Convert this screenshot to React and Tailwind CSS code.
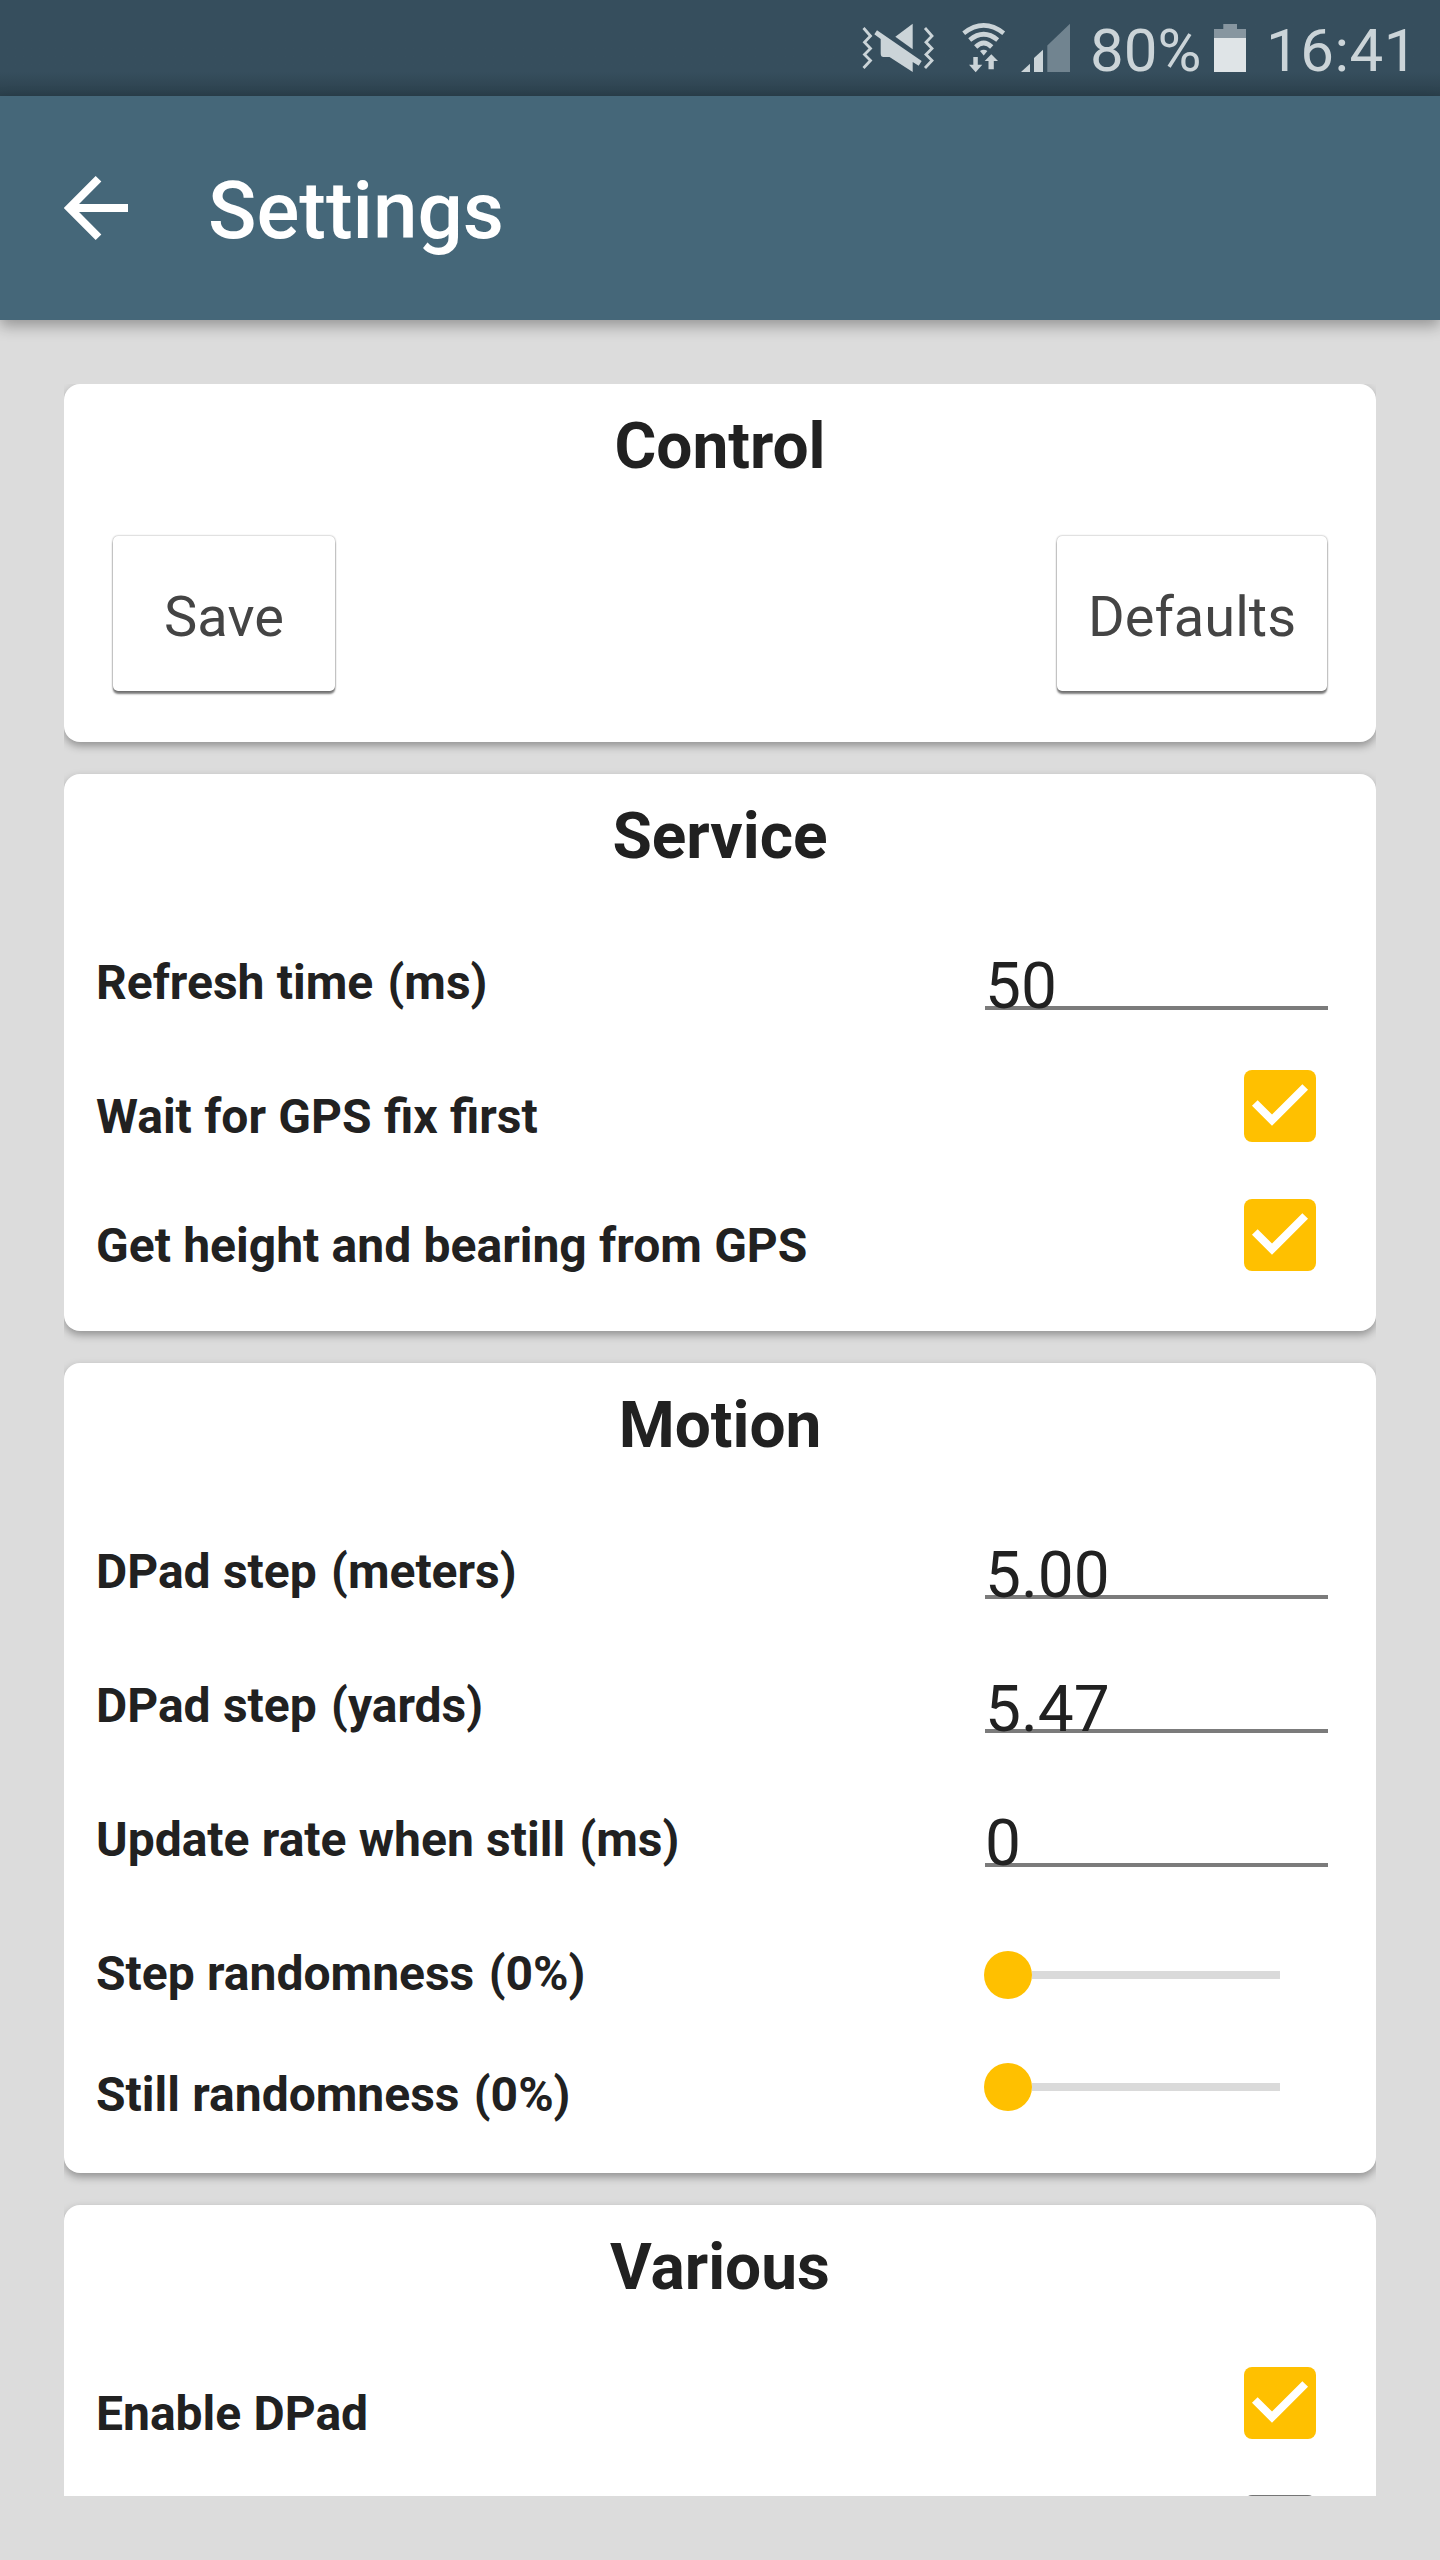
import React from "react";

function MuteVibrateIcon() {
  return (
    <svg className="h-[60px] w-[76px]" viewBox="860 20 76 60" fill="none">
      <g stroke="#cbd4d8" strokeWidth="2.800">
        <path d="M863.500 28L870.500 36L864.500 42.200L870.500 48.500L864.500 54.500L870.500 60.500L863.500 68" />
        <path d="M925 28L932 36L926 42.200L932 48.500L926 54.500L932 60.500L925 68" />
      </g>
      <path d="M912.700 23.700V49.300L895.300 36.700Z" fill="#cbd4d8" />
      <path d="M877 30.200L921.700 61L918.700 65.700L912.700 62V72L889.500 57H883.500Q880.700 57 880.700 53.500V39L874.300 34.200Z" fill="#cbd4d8" />
    </svg>
  );
}

function WifiIcon() {
  return (
    <svg className="h-[60px] w-[46px]" viewBox="960 20 46 60" fill="none">
      <g stroke="#cbd4d8" strokeWidth="4.600">
        <path d="M963.700 33.200Q983.700 17.600 1003.700 33.200" />
        <path d="M969.700 40Q983.700 28.500 997.700 40" />
        <path d="M975.700 47Q983.700 39 991.700 47" />
      </g>
      <path d="M980 51Q983.700 48.500 987.400 51L983.700 55.500Z" fill="#cbd4d8" />
      <path d="M973.300 57H977.800V64.700H982.300L975.700 72.300L969 64.700H973.300Z" fill="#cbd4d8" />
      <path d="M991.300 54.300L998 61H993.800V69.300H988.500V61H984.700Z" fill="#cbd4d8" />
    </svg>
  );
}

function SignalIcon() {
  return (
    <svg className="h-[60px] w-[52px]" viewBox="1020 20 52 60">
      <path d="M1021 72L1030 63.700V72Z" fill="#cbd4d8" />
      <path d="M1034 72V58L1043 49.700V72Z" fill="#cbd4d8" />
      <path d="M1047.300 72V45.500L1070 23.700V72Z" fill="#718490" />
    </svg>
  );
}

function BatteryIcon() {
  return (
    <svg className="h-[60px] w-[32px]" viewBox="0 20 32 60">
      <path d="M0 38V29H9.300V24H23V29H32V38Z" fill="#8796a0" />
      <path d="M0 38H32V72H0Z" fill="#dfe4e7" />
    </svg>
  );
}

function StatusBar() {
  return (
    <div className="flex h-24 items-start justify-end bg-linear-to-b from-[#364e5d] from-75% to-[#2b404c] pt-5 text-[60px] leading-[61px] text-[#cbd4d8]">
      <MuteVibrateIcon />
      <div className="ml-6"><WifiIcon /></div>
      <div className="ml-[14px]"><SignalIcon /></div>
      <div className="ml-[18px] w-[112px] whitespace-nowrap">80%</div>
      <div className="ml-[12px]"><BatteryIcon /></div>
      <div className="ml-[20px] w-[174px] tracking-[0.5px] whitespace-nowrap">16:41</div>
    </div>
  );
}

function AppBar() {
  return (
    <header className="relative flex h-56 items-center bg-[#456779] shadow-[0_6px_14px_rgba(0,0,0,0.32)]">
      <svg className="ml-16 h-16 w-16" viewBox="0 0 64 64" fill="none" stroke="#fff" strokeWidth="8">
        <path d="M64 32H10M34.500 2.800L5.500 32L34.500 61.200" />
      </svg>
      <h1 className="mt-[6px] ml-20 text-[80px] leading-[96px] font-medium text-white">Settings</h1>
    </header>
  );
}

function Card({ title, children }) {
  return (
    <section className="rounded-2xl bg-white pb-[21px] shadow-[0_4px_8px_rgba(0,0,0,0.34)]">
      <h2 className="mb-[18px] text-center text-[64px] leading-[126px] font-bold">{title}</h2>
      {children}
    </section>
  );
}

function ActionButton({ children, className }) {
  return (
    <button className={"h-[155px] rounded-[5px] bg-white pt-[6px] text-[56px] leading-none text-[#444] shadow-[0_0_2px_rgba(0,0,0,0.45),0_3px_2px_rgba(0,0,0,0.5)] " + className}>
      {children}
    </button>
  );
}

function Label({ text, unit, className }) {
  return (
    <label className={"text-[48px] leading-[56px] font-bold [word-spacing:0.4px] " + className}>
      {text}
      {unit && <span className="ml-[2px]"> {unit}</span>}
    </label>
  );
}

function FieldRow({ label, unit, value }) {
  return (
    <div className="flex h-[134px] items-start justify-between pr-12 pl-8">
      <Label text={label} unit={unit} className="mt-[37px]" />
      <div className="mt-8 h-[60px] w-[343px] border-b-4 border-[#7b7b7b] text-[64px] leading-[74px]">{value}</div>
    </div>
  );
}

function CheckRow({ label, checked }) {
  return (
    <div className="flex h-[129px] items-start justify-between pr-[60px] pl-8">
      <Label text={label} className="mt-[37px]" />
      {checked ? (
        <div className="mt-[18px] size-[72px] rounded-lg bg-[#ffc000]">
          <svg viewBox="0 0 72 72" fill="none" stroke="#fff" strokeWidth="8">
            <path d="M10.800 33L28 50.200L61.200 17" />
          </svg>
        </div>
      ) : (
        <div className="mt-[17px] size-[72px] rounded-lg border-8 border-[#757575]" />
      )}
    </div>
  );
}

function SliderRow({ label, unit, className, labelClass, sliderClass }) {
  return (
    <div className={"flex items-start justify-between pr-24 pl-8 " + className}>
      <Label text={label} unit={unit} className={labelClass} />
      <div className={"flex w-[296px] items-center " + sliderClass}>
        <div className="size-12 rounded-full bg-[#ffc000]" />
        <div className="h-2 flex-1 bg-[#dadada]" />
      </div>
    </div>
  );
}

export default function App() {
  return (
    <div className="flex h-[2560px] w-[1440px] flex-col overflow-hidden bg-[#dcdcdc] font-[Roboto,sans-serif] text-[#212121]">
      <StatusBar />
      <AppBar />
      <main className="mx-16 mt-16 flex h-[2112px] flex-col gap-8 overflow-hidden">
        <Card title="Control">
          <div className="-mt-5 flex justify-between px-[49px] pt-7 pb-[30px]">
            <ActionButton className="w-[222px]">Save</ActionButton>
            <ActionButton className="w-[270px]">Defaults</ActionButton>
          </div>
        </Card>
        <Card title="Service">
          <FieldRow label="Refresh time" unit="(ms)" value="50" />
          <CheckRow label="Wait for GPS fix first" checked />
          <CheckRow label="Get height and bearing from GPS" checked />
        </Card>
        <Card title="Motion">
          <FieldRow label="DPad step" unit="(meters)" value="5.00" />
          <FieldRow label="DPad step" unit="(yards)" value="5.47" />
          <FieldRow label="Update rate when still" unit="(ms)" value="0" />
          <SliderRow label="Step randomness" unit="(0%)" className="h-[134px]" labelClass="mt-[37px]" sliderClass="mt-[42px]" />
          <SliderRow label="Still randomness" unit="(0%)" className="h-[109px]" labelClass="mt-6" sliderClass="mt-5" />
        </Card>
        <Card title="Various">
          <CheckRow label="Enable DPad" checked />
          <CheckRow label="" />
        </Card>
      </main>
    </div>
  );
}
